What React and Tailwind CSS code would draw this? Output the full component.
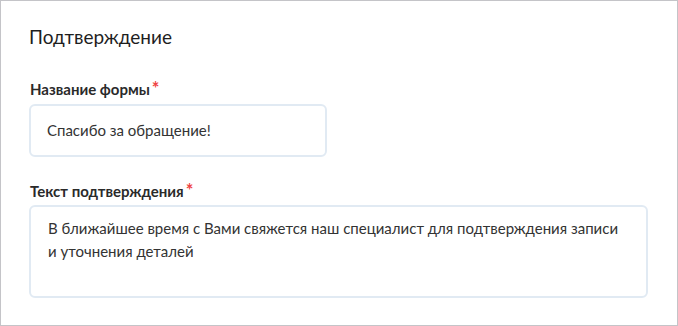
export default function App() {
  return (
    <div className="w-[678px] h-[326px] bg-white border border-[#c4c4c8] font-['Lato','Noto_Sans',sans-serif] text-[#222]">
      <div className="pl-[28px] pr-[29px] pt-[24px]">
        <h2 className="text-[19px] leading-[24px] text-[#1e1e1e]">Подтверждение</h2>

        <div className="mt-[31px]">
          <label className="flex items-start text-[15px] leading-[18px] font-bold text-[#2a2a2a] pl-px">
            Название формы
            <span className="text-[#ef4444] text-[18px] leading-[12px] ml-[2px] mt-[2px]">*</span>
          </label>
          <div className="mt-[6px] w-[298px] h-[53px] border-2 border-[#e1eaf3] rounded-[6px] flex items-center px-[16px] text-[15px] text-[#333]">
            Спасибо за обращение!
          </div>
        </div>

        <div className="mt-[25px]">
          <label className="flex items-start text-[15px] leading-[18px] font-bold text-[#2a2a2a] pl-px">
            Текст подтверждения
            <span className="text-[#ef4444] text-[18px] leading-[12px] ml-[2px] mt-[2px]">*</span>
          </label>
          <div className="mt-[5px] h-[93px] border-2 border-[#e1eaf3] rounded-[6px] px-[17px] pt-[10px] text-[15px] leading-[23px] text-[#333]">
            В ближайшее время с Вами свяжется наш специалист для подтверждения записи
            <br />
            и уточнения деталей
          </div>
        </div>
      </div>
    </div>
  );
}
